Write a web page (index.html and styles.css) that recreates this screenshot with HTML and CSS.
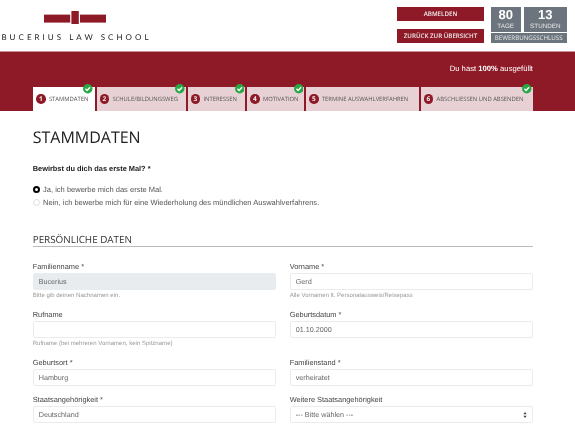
FILE: index.html
```html
<!DOCTYPE html>
<html lang="de">
<head>
<meta charset="utf-8">
<title>Stammdaten</title>
<link rel="stylesheet" href="styles.css">
</head>
<body>
<header class="top">
  <div class="logo">
    <svg class="logo-mark" width="62" height="13" viewBox="0 0 62 13"><rect x="0" y="3.6" width="26.2" height="8" fill="#8f1a27"/><rect x="27.4" y="0" width="7.4" height="13" fill="#8f1a27"/><rect x="36" y="3.6" width="26" height="8" fill="#8f1a27"/></svg>
    <div class="logo-text">BUCERIUS LAW SCHOOL</div>
  </div>
  <div class="actions">
    <a class="btn">ABMELDEN</a>
    <a class="btn">ZURÜCK ZUR ÜBERSICHT</a>
  </div>
  <div class="deadline">
    <div class="counts">
      <div class="count days"><b>80</b><span>TAGE</span></div>
      <div class="count hours"><b>13</b><span>STUNDEN</span></div>
    </div>
    <div class="deadline-label">BEWERBUNGSSCHLUSS</div>
  </div>
</header>
<section class="band">
  <p class="progress">Du hast <b>100%</b> ausgefüllt</p>
  <nav class="tabs">
    <a class="tab active t1"><i>1</i>STAMMDATEN<svg class="check" viewBox="0 0 10 10"><circle cx="5" cy="5" r="5" fill="#28a745"/><path d="M2.6 5.1 4.3 6.8 7.5 3.5" fill="none" stroke="#fff" stroke-width="1.5"/></svg></a>
    <a class="tab t2"><i>2</i>SCHULE/BILDUNGSWEG<svg class="check" viewBox="0 0 10 10"><circle cx="5" cy="5" r="5" fill="#28a745"/><path d="M2.6 5.1 4.3 6.8 7.5 3.5" fill="none" stroke="#fff" stroke-width="1.5"/></svg></a>
    <a class="tab t3"><i>3</i>INTERESSEN<svg class="check" viewBox="0 0 10 10"><circle cx="5" cy="5" r="5" fill="#28a745"/><path d="M2.6 5.1 4.3 6.8 7.5 3.5" fill="none" stroke="#fff" stroke-width="1.5"/></svg></a>
    <a class="tab t4"><i>4</i>MOTIVATION<svg class="check" viewBox="0 0 10 10"><circle cx="5" cy="5" r="5" fill="#28a745"/><path d="M2.6 5.1 4.3 6.8 7.5 3.5" fill="none" stroke="#fff" stroke-width="1.5"/></svg></a>
    <a class="tab t5"><i>5</i>TERMINE AUSWAHLVERFAHREN</a>
    <a class="tab t6"><i>6</i>ABSCHLIESSEN UND ABSENDEN<svg class="check" viewBox="0 0 10 10"><circle cx="5" cy="5" r="5" fill="#28a745"/><path d="M2.6 5.1 4.3 6.8 7.5 3.5" fill="none" stroke="#fff" stroke-width="1.5"/></svg></a>
  </nav>
</section>
<main class="content">
  <h1>STAMMDATEN</h1>
  <p class="question">Bewirbst du dich das erste Mal? *</p>
  <div class="radios">
    <label class="radio"><span class="dot on"></span>Ja, ich bewerbe mich das erste Mal.</label>
    <label class="radio"><span class="dot"></span>Nein, ich bewerbe mich für eine Wiederholung des mündlichen Auswahlverfahrens.</label>
  </div>
  <h2>PERSÖNLICHE DATEN</h2>
  <div class="form">
    <div class="field tall"><label>Familienname *</label><div class="input disabled">Bucerius</div><small>Bitte gib deinen Nachnamen ein.</small></div>
    <div class="field tall"><label>Vorname *</label><div class="input">Gerd</div><small>Alle Vornamen lt. Personalausweis/Reisepass</small></div>
    <div class="field tall"><label>Rufname</label><div class="input"></div><small>Rufname (bei mehreren Vornamen, kein Spitzname)</small></div>
    <div class="field tall"><label>Geburtsdatum *</label><div class="input">01.10.2000</div></div>
    <div class="field"><label>Geburtsort *</label><div class="input">Hamburg</div></div>
    <div class="field"><label>Familienstand *</label><div class="input">verheiratet</div></div>
    <div class="field"><label>Staatsangehörigkeit *</label><div class="input">Deutschland</div></div>
    <div class="field"><label>Weitere Staatsangehörigkeit</label><div class="input select">--- Bitte wählen ---<svg width="4" height="6" viewBox="0 0 6 9"><path d="M3 0 5.5 3.4H.5zM3 9 .5 5.6h5z" fill="#444"/></svg></div></div>
  </div>
</main>
</body>
</html>
```
FILE: styles.css
```css
* { box-sizing: border-box; }
html, body { margin: 0; height: 431px; overflow: hidden; }
body { background: #fff; font-family: "Liberation Sans", Arial, sans-serif; color: #212529; text-rendering: geometricPrecision; }
.top, .band, .content { will-change: transform; }
.top { height: 51px; display: flex; }
.logo { width: 397.3px; padding: 11px 0 0 1.4px; }
.logo-mark { display: block; margin-left: 43px; }
.logo-text { margin-top: 7px; font: 8px/12px "Lato", sans-serif; letter-spacing: 3.03px; color: #222; white-space: nowrap; }
.actions { width: 86.4px; padding-top: 7.4px; display: flex; flex-direction: column; gap: 7.6px; }
.btn { height: 14px; background: #8f1a27; color: #eee; font: 600 6.2px/14px "Open Sans", sans-serif; text-align: center; white-space: nowrap; }
.deadline { margin-left: 7px; padding-top: 7.4px; width: 76px; }
.counts { display: flex; gap: 3.3px; }
.count { height: 24.4px; background: #6c757d; color: #fff; text-align: center; display: flex; flex-direction: column; align-items: center; }
.count b { font: 700 13px/15.6px "Liberation Sans", sans-serif; }
.count span { font: 6.3px/8px "Liberation Sans", sans-serif; color: #e4e6e8; }
.days { width: 30px; }
.hours { width: 42.7px; }
.deadline-label { margin-top: 1.6px; width: 76px; height: 9.4px; background: #6c757d; color: #e4e6e8; font: 6.2px/9.4px "Open Sans", sans-serif; text-align: center; white-space: nowrap; }
.band { height: 60px; background: #8f1a27; border-top: 1px solid #c98f96; padding: 10.5px 42px 0 33px; display: flex; flex-direction: column; }
.progress { margin: 0; height: 24.8px; text-align: right; color: #fff; font: 7.7px/12px "Liberation Sans", sans-serif; }
.tabs { display: flex; gap: 2px; height: 23.7px; }
.tab { position: relative; display: flex; align-items: center; background: #e8d1d4; color: #555; font: 5.85px/24px "Open Sans", sans-serif; padding-left: 3px; white-space: nowrap; }
.tab i { flex: none; width: 9.5px; height: 9.5px; margin-right: 3.4px; border-radius: 50%; background: #8f1a27; color: #eee; font: 700 6.5px/9.5px "Open Sans", sans-serif; text-align: center; font-style: normal; }
.tab.active { background: #fff; }
.t1 { width: 61.5px; }
.t2 { width: 89px; }
.t3 { width: 57.5px; }
.t4 { width: 57px; }
.t5 { width: 112.7px; }
.t6 { width: 112.3px; }
.check { position: absolute; right: 1px; top: -3px; width: 9.5px; height: 9.5px; }
.t1 .check { right: 1.8px; }
.content { padding: 0 42px 0 32.7px; }
h1 { margin: 15px 0 0; font: 400 16px/22px "Open Sans", sans-serif; color: #222; }
.question { margin: 15px 0 0; font: 700 7.4px/12px "Liberation Sans", sans-serif; color: #222; }
.radios { margin-top: 7.5px; display: flex; flex-direction: column; }
.radio { display: flex; align-items: center; height: 13px; font-size: 7.53px; color: #555; }
.dot { width: 7px; height: 7px; margin-right: 3.4px; border-radius: 50%; border: 1px solid #ddd; }
.dot.on { border: 2.4px solid #000; }
h2 { margin: 23.5px 0 0; font: 400 9.9px/15.5px "Open Sans", sans-serif; color: #333; border-bottom: 1px solid #bbb; height: 15px; }
.form { margin-top: 13.5px; display: grid; grid-template-columns: 243.5px 243.5px; column-gap: 13.5px; }
.field { height: 37px; }
.field.tall { height: 48px; }
.field label { display: block; font-size: 7.4px; line-height: 11px; color: #444; }
.input { height: 17.4px; margin-top: 1.6px; padding: 0 5px; border: 1px solid #e9ecef; border-radius: 2px; background: #fff; color: #666; font-size: 7.2px; line-height: 15px; display: flex; justify-content: space-between; align-items: center; }
.input.disabled { background: #e9ecef; }
.field small { display: block; margin-top: 2px; font-size: 6.05px; line-height: 8px; color: #999; }
```
